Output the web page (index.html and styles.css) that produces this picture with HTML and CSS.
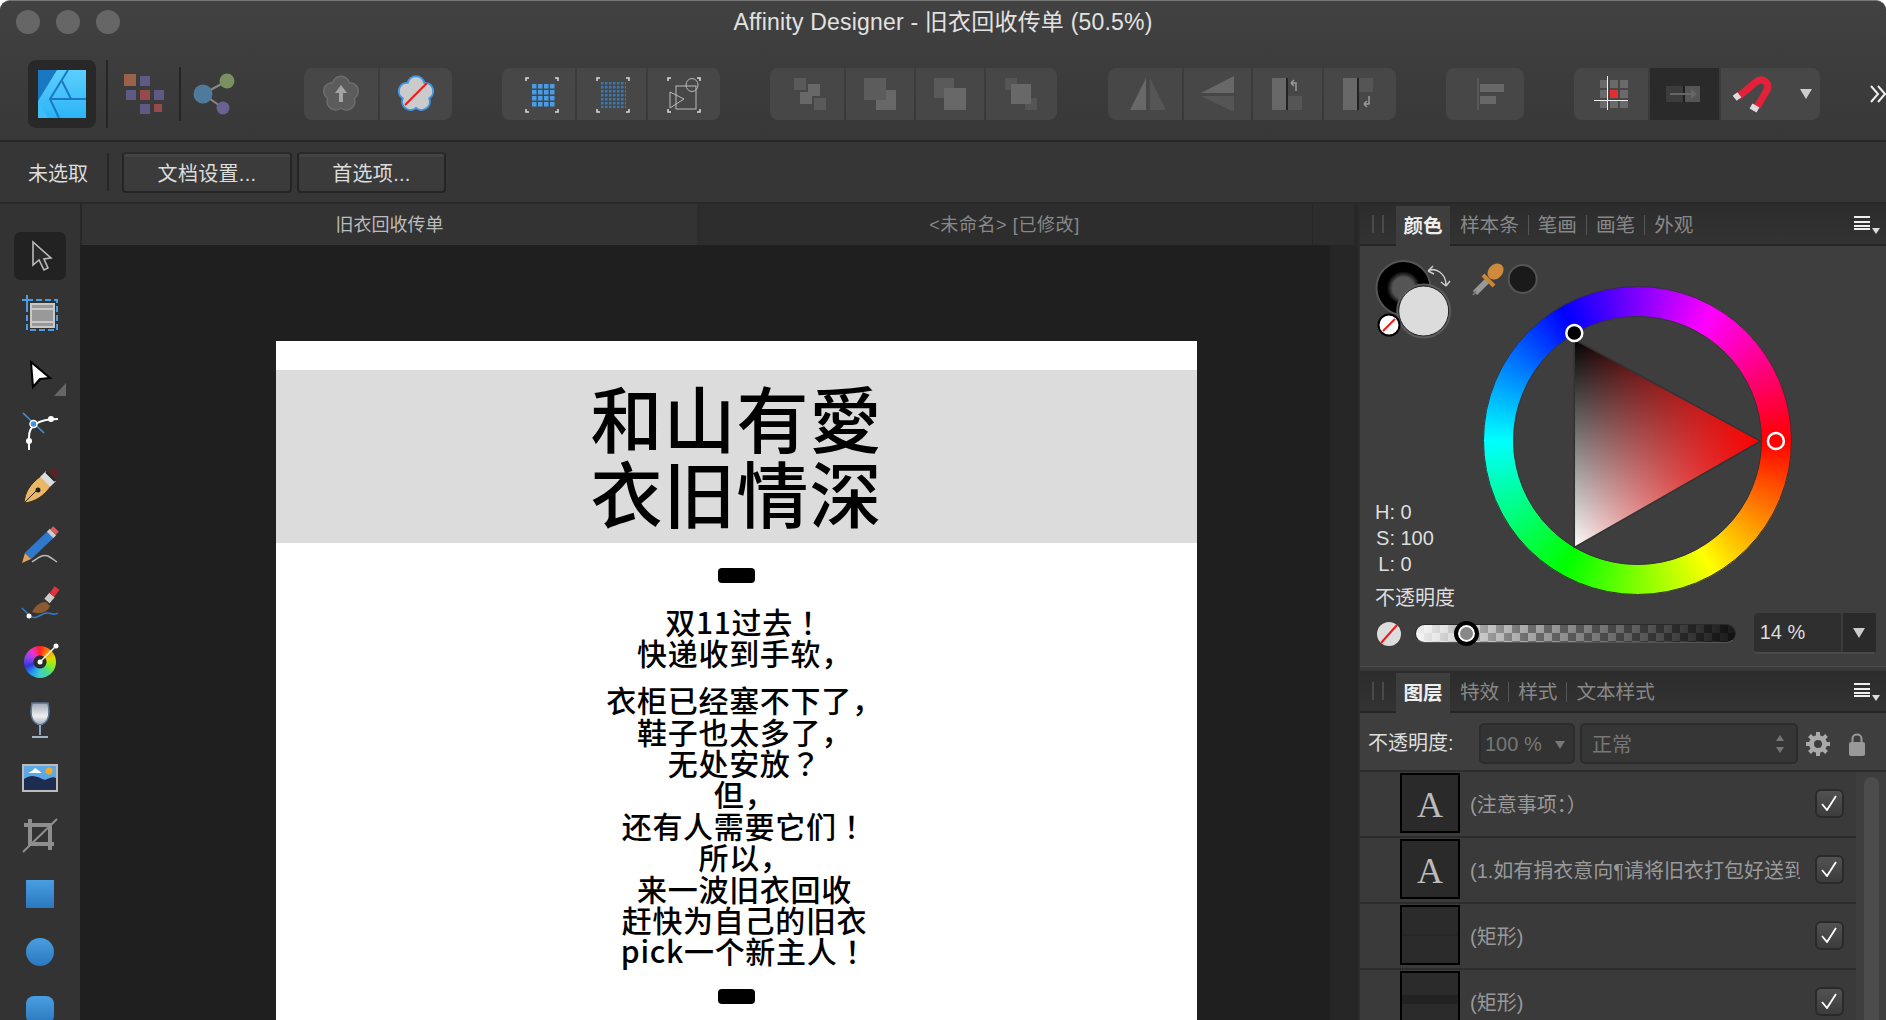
FILE: index.html
```html
<!DOCTYPE html>
<html lang="zh-CN">
<head>
    <meta charset="UTF-8">
    <title>Affinity Designer</title>
    <link rel="stylesheet" href="styles.css">
</head>
<body>
<div class="window">
    <div class="titlebar">
        <div class="lights"><span></span><span></span><span></span></div>
        <div class="title">Affinity Designer - 旧衣回收传单 (50.5%)</div>
    </div>

    <div class="toolbar">
        <div class="app-box">
            <svg width="48" height="48" viewBox="0 0 48 48">
                <defs><linearGradient id="appBg" x1="0" y1="0" x2="0" y2="1"><stop offset="0" stop-color="#5ccfff"/><stop offset="1" stop-color="#2cb4f6"/></linearGradient></defs>
                <rect width="48" height="48" fill="url(#appBg)"/>
                <path d="M0 0H19L0 31Z" fill="#1a78c2"/>
                <path d="M30 0L12 29L21 48" fill="none" stroke="#1a78c2" stroke-width="2"/>
                <path d="M12 29H48M24 11L33 29" fill="none" stroke="#1a78c2" stroke-width="2"/>
                <path d="M0 31L10 48H0Z" fill="#3fbdf8"/>
            </svg>
        </div>
        <div class="vsep tall"></div>
        <svg class="persona" width="71" height="68" viewBox="0 0 71 68">
            <rect x="16" y="14" width="12" height="12" fill="#9a6248"/>
            <rect x="32" y="16" width="10" height="10" fill="#5f5a85"/>
            <rect x="18" y="30" width="10" height="10" fill="#5f5a85"/>
            <rect x="32" y="30" width="10" height="10" fill="#964a4c"/>
            <rect x="46" y="30" width="10" height="10" fill="#5f5a85"/>
            <rect x="32" y="44" width="10" height="10" fill="#5f5a85"/>
            <rect x="46" y="44" width="8" height="8" fill="#964a4c"/>
        </svg>
        <div class="vsep"></div>
        <svg class="persona" width="60" height="68" viewBox="1 0 60 68">
            <path d="M23 34L47 21M23 34L43 48" stroke="#888" stroke-width="2"/>
            <circle cx="23" cy="34" r="9.5" fill="#4e7b9c"/>
            <circle cx="47" cy="21" r="7.5" fill="#7a9060"/>
            <circle cx="43" cy="48" r="6.5" fill="#6a6292"/>
        </svg>

        <div class="group g1">
            <div class="tb"><svg width="40" height="40" viewBox="0 0 40 40">
                <path d="M11.77 8.67A8.5 8.5 0 0 1 28.23 8.67A8.5 8.5 0 0 1 33.31 24.33A8.5 8.5 0 0 1 20 34A8.5 8.5 0 0 1 6.69 24.33A8.5 8.5 0 0 1 11.77 8.67Z" fill="#5c5c5c" stroke="#6e6e6e" stroke-width="1.5"/>
                <path d="M20 11L26 19H22V28H18V19H14Z" fill="#a4a4a4"/>
            </svg></div>
            <div class="tb"><svg width="40" height="40" viewBox="0 0 40 40">
                <path d="M11.77 8.67A8.5 8.5 0 0 1 28.23 8.67A8.5 8.5 0 0 1 33.31 24.33A8.5 8.5 0 0 1 20 34A8.5 8.5 0 0 1 6.69 24.33A8.5 8.5 0 0 1 11.77 8.67Z" fill="#cbcbcb" stroke="#3e97e6" stroke-width="2"/>
                <path d="M9 31L31 9" stroke="#f01818" stroke-width="2"/>
            </svg></div>
        </div>

        <div class="group g2">
            <div class="tb"><svg width="40" height="40" viewBox="-3 0 40 40">
                <defs><pattern id="dotsBig" width="6" height="6" patternUnits="userSpaceOnUse" x="10" y="10"><rect width="4.5" height="4.5" fill="#4a9ce6"/></pattern></defs>
                <path class="marks" d="M4 7V4H7M33 4H36V7M36 35V38H33M7 38H4V35"/>
                <rect x="10" y="10" width="23" height="23" fill="url(#dotsBig)"/>
            </svg></div>
            <div class="tb"><svg width="40" height="40" viewBox="-1 0 40 40">
                <defs><pattern id="dotsSmall" width="4" height="4" patternUnits="userSpaceOnUse" x="8" y="8"><rect width="2.5" height="2.5" fill="#3a79b6"/></pattern></defs>
                <path class="marks" d="M4 7V4H7M33 4H36V7M36 35V38H33M7 38H4V35"/>
                <rect x="8" y="8" width="25" height="26" fill="url(#dotsSmall)"/>
            </svg></div>
            <div class="tb"><svg width="40" height="40" viewBox="0 0 40 40">
                <path class="marks" d="M4 7V4H7M33 4H36V7M36 35V38H33M7 38H4V35"/>
                <g fill="none" stroke="#bbb" stroke-width="1">
                    <rect x="12" y="12" width="20" height="23"/>
                    <ellipse cx="28" cy="11" rx="6" ry="6.5"/>
                    <path d="M6 18L20 25L6 34Z"/>
                </g>
            </svg></div>
        </div>

        <div class="group g3">
            <div class="tb"><svg width="40" height="40" viewBox="0 0 40 40">
                <rect x="7" y="4" width="12" height="12" fill="#5a5a5a"/>
                <rect x="21" y="10" width="12" height="12" fill="#686868"/>
                <rect x="13" y="18" width="12" height="12" fill="#686868"/>
                <rect x="27" y="24" width="12" height="12" fill="#5a5a5a"/>
            </svg></div>
            <div class="tb"><svg width="40" height="40" viewBox="0 0 40 40">
                <rect x="4" y="4" width="22" height="22" fill="#5c5c5c"/>
                <path d="M26 16H36V36H16V26H26Z" fill="#686868"/>
            </svg></div>
            <div class="tb"><svg width="40" height="40" viewBox="0 0 40 40">
                <rect x="4" y="4" width="20" height="20" fill="#5a5a5a"/>
                <rect x="14" y="14" width="22" height="22" fill="#686868"/>
            </svg></div>
            <div class="tb"><svg width="40" height="40" viewBox="0 0 40 40">
                <rect x="3" y="4" width="12" height="12" fill="#555"/>
                <rect x="23" y="24" width="12" height="12" fill="#555"/>
                <rect x="9" y="10" width="20" height="20" fill="#686868"/>
            </svg></div>
        </div>

        <div class="group g4">
            <div class="tb"><svg width="40" height="40" viewBox="0 0 40 40">
                <path d="M21 4V36H5Z" fill="#686868"/><path d="M25 4V36H41Z" fill="#555"/>
            </svg></div>
            <div class="tb"><svg width="40" height="40" viewBox="0 0 40 40">
                <path d="M36 2L3 19H36Z" fill="#686868"/><path d="M3 22H36V38Z" fill="#555"/>
            </svg></div>
            <div class="tb"><svg width="40" height="40" viewBox="0 0 40 40">
                <rect x="4" y="4" width="14" height="32" fill="#686868"/>
                <rect x="18" y="4" width="2" height="32" fill="#222"/>
                <rect x="20" y="22" width="14" height="14" fill="#555"/>
                <path d="M28 17V9H23M23 9L26 6M23 9L26 12" fill="none" stroke="#999" stroke-width="1.5"/>
            </svg></div>
            <div class="tb"><svg width="40" height="40" viewBox="0 0 40 40">
                <rect x="3" y="4" width="14" height="32" fill="#686868"/>
                <rect x="17" y="4" width="2" height="32" fill="#222"/>
                <rect x="19" y="4" width="14" height="14" fill="#555"/>
                <path d="M29 22V30H24M24 30L27 27M24 30L27 33" fill="none" stroke="#999" stroke-width="1.5"/>
            </svg></div>
        </div>

        <div class="group g5">
            <div class="tb"><svg width="40" height="40" viewBox="0 0 40 40">
                <rect x="12" y="4" width="2" height="32" fill="#585858"/>
                <rect x="15" y="10" width="24" height="8" fill="#686868"/>
                <rect x="15" y="22" width="16" height="8" fill="#686868"/>
            </svg></div>
        </div>

        <div class="group g6">
            <div class="tb"><svg width="40" height="40" viewBox="0 0 40 40">
                <g fill="#6a6a6a">
                    <rect x="9" y="6" width="8" height="8"/><rect x="19" y="6" width="8" height="8"/><rect x="29" y="6" width="8" height="8"/>
                    <rect x="9" y="16" width="8" height="8"/><rect x="29" y="16" width="8" height="8"/>
                    <rect x="9" y="26" width="8" height="8"/><rect x="19" y="26" width="8" height="8"/><rect x="29" y="26" width="8" height="8"/>
                </g>
                <rect x="19" y="16" width="8" height="8" fill="#e22f2f"/>
                <path d="M3 26.5H37M16.5 2V36" stroke="#eee" stroke-width="1"/>
            </svg></div>
            <div class="tb off"><svg width="40" height="40" viewBox="0 0 40 40">
                <rect x="1" y="12" width="18" height="16" fill="#3c3c3c"/>
                <rect x="19" y="12" width="16" height="16" fill="#555"/>
                <rect x="18" y="12" width="2" height="16" fill="#1c1c1c"/>
                <path d="M5 19H26V15L32 20L26 25V21H5Z" fill="#666"/>
            </svg></div>
            <div class="tb snap">
                <svg width="44" height="40" viewBox="0 0 44 40">
                    <path d="M9 23L27 8C33 3 41 8 38 16L28 33" fill="none" stroke="#e5213a" stroke-width="7"/>
                    <path d="M10 25L6 20M29 36L22 32" stroke="#ddd" stroke-width="6"/>
                </svg>
                <span class="tri"></span>
            </div>
        </div>

        <svg class="more" width="16" height="18" viewBox="0 0 16 18"><path d="M1 1L8 9L1 17M8 1L15 9L8 17" fill="none" stroke="#eee" stroke-width="2"/></svg>
    </div>

    <div class="context">
        <span class="no-sel">未选取</span>
        <div class="vsep short"></div>
        <button class="ctx-btn doc">文档设置...</button>
        <button class="ctx-btn prefs">首选项...</button>
    </div>

    <div class="workspace">
        <div class="tools">
            <div class="tool"><svg width="80" height="58" viewBox="0 0 80 58">
                <rect x="14" y="5" width="52" height="48" rx="7" fill="#222"/>
                <path d="M33 15V38L39 33L44 43L48 41L44 32L51 31Z" fill="#2a2a2a" stroke="#bbb" stroke-width="1.6"/>
            </svg></div>
            <div class="tool"><svg width="80" height="58" viewBox="0 0 80 58">
                <rect x="27" y="15" width="30" height="30" fill="none" stroke="#4a9ce6" stroke-width="2" stroke-dasharray="6 3"/>
                <path d="M22 15H33M27 10V21" stroke="#4a9ce6" stroke-width="2"/>
                <rect x="31" y="19" width="23" height="23" fill="#999" stroke="#c8c8c8" stroke-width="2"/>
                <path d="M31 24H54M31 37H54" stroke="#c8c8c8" stroke-width="2"/>
            </svg></div>
            <div class="tool"><svg width="80" height="58" viewBox="0 0 80 58">
                <path d="M31 19L50 35L40 36L33 44Z" fill="#fff" stroke="#000" stroke-width="2"/>
                <path d="M66 40V53H54Z" fill="#666"/>
            </svg></div>
            <div class="tool"><svg width="80" height="58" viewBox="0 0 80 58">
                <path d="M23 12L44 32" stroke="#3f92dc" stroke-width="1.6"/>
                <path d="M29 49V36C29 25 38 18 58 18" fill="none" stroke="#fff" stroke-width="2"/>
                <circle cx="51" cy="18" r="3" fill="#fff"/><circle cx="29" cy="40" r="3" fill="#fff"/>
                <circle cx="33.5" cy="23" r="3.5" fill="#3f92dc" stroke="#fff" stroke-width="1.5"/>
            </svg></div>
            <div class="tool"><svg width="80" height="58" viewBox="0 0 80 58">
                <path d="M24 44C25 33 30 25 41 17L51 27C44 37 35 43 24 44Z" fill="#eab766" stroke="#3b2f1c" stroke-width="1"/>
                <path d="M24 44L37 31" stroke="#222" stroke-width="1"/><circle cx="38" cy="31" r="2.5" fill="#222"/>
                <path d="M43 15L53 25" stroke="#ddd" stroke-width="8"/>
                <path d="M46 13L55 22" stroke="#222" stroke-width="2"/>
                <path d="M48 11L58 11L58 21Z" fill="#5a2222"/>
            </svg></div>
            <div class="tool"><svg width="80" height="58" viewBox="0 -2 80 58">
                <path d="M28 37L50 16" stroke="#2f78cc" stroke-width="9"/>
                <path d="M25 34L31 40L22 44Z" fill="#e0a060"/>
                <path d="M50 16L53 13" stroke="#ccc" stroke-width="9"/>
                <path d="M53 13L56 10" stroke="#e05a5a" stroke-width="8"/>
                <path d="M32 43C38 39 42 35 48 37C52 39 54 41 57 43" fill="none" stroke="#bbb" stroke-width="1.5"/>
            </svg></div>
            <div class="tool"><svg width="80" height="58" viewBox="0 0 80 58">
                <path d="M32 37C36 30 40 27 46 27L50 31C48 37 40 40 32 37Z" fill="#8a5a30"/>
                <path d="M47 26L52 20" stroke="#ccc" stroke-width="7"/>
                <path d="M52 20L57 13" stroke="#e0323a" stroke-width="6"/>
                <path d="M22 33L30 41C36 46 42 37 48 38C52 38 54 41 58 38" fill="none" stroke="#2f7ec8" stroke-width="1.5"/>
                <circle cx="29" cy="41" r="2.5" fill="#fff"/>
            </svg></div>
            <div class="tool">
                <div class="hue-tool"></div>
                <svg class="hue-handle" width="80" height="58" viewBox="0 0 80 58">
                    <path d="M40 29L56 13" stroke="#fff" stroke-width="1.5"/>
                    <circle cx="40" cy="29" r="2.5" fill="#fff"/><circle cx="56" cy="13" r="2.5" fill="#fff"/>
                </svg>
            </div>
            <div class="tool"><svg width="80" height="58" viewBox="0 0 80 58">
                <defs><linearGradient id="glass" x1="0" y1="0" x2="0" y2="1"><stop offset="0" stop-color="#9aa7b5"/><stop offset=".6" stop-color="#f0f0f0"/><stop offset="1" stop-color="#9aa7b5"/></linearGradient></defs>
                <path d="M32 12H48C50 22 49 32 40 34C31 32 30 22 32 12Z" fill="url(#glass)" stroke="#5a7490" stroke-width="1.5"/>
                <path d="M40 34V44" stroke="#8ea4ba" stroke-width="2"/>
                <path d="M32 46H48" stroke="#9fb2c4" stroke-width="2"/>
            </svg></div>
            <div class="tool"><svg width="80" height="58" viewBox="0 0 80 58">
                <rect x="23" y="16" width="34" height="26" fill="#5aa8e8" stroke="#bbb" stroke-width="2"/>
                <path d="M24 30C32 24 38 28 45 31C49 29 53 27 56 29V41H24Z" fill="#1e2c50"/>
                <path d="M28 24H42L38 21L35 19L32 22Z" fill="#fff"/>
                <circle cx="49" cy="22" r="3.5" fill="#f5a823"/>
            </svg></div>
            <div class="tool"><svg width="80" height="58" viewBox="0 0 80 58">
                <path d="M30 12V37H54M24 18H50V43" fill="none" stroke="#8e8e8e" stroke-width="4"/>
                <path d="M23 45L57 12" stroke="#8e8e8e" stroke-width="2"/>
            </svg></div>
            <div class="tool"><div class="shape"></div></div>
            <div class="tool"><div class="shape circle"></div></div>
            <div class="tool"><div class="shape rounded"></div></div>
        </div>

        <div class="center">
            <div class="doc-tabs">
                <div class="doc-tab active">旧衣回收传单</div>
                <div class="doc-tab">&lt;未命名&gt; [已修改]</div>
                <div class="doc-tab-end"></div>
            </div>
            <div class="canvas-row">
                <div class="canvas">
                    <div class="page">
                        <div class="band">
                            <div class="headline">和山有<span lang="zh-TW">愛</span></div>
                            <div class="headline">衣旧情深</div>
                        </div>
                        <div class="pill"></div>
                        <p class="copy">双11过去<span class="mark" lang="zh-TW">！</span><br>快递收到手软，</p>
                        <p class="copy">衣柜已经塞不下了，<br>鞋子也太多了，<br>无处安放<span class="mark" lang="zh-TW">？</span><br>但，<br>还有人需要它们<span class="mark" lang="zh-TW">！</span><br>所以，<br>来一波旧衣回收<br>赶快为自己的旧衣<br>pick一个新主人<span class="mark" lang="zh-TW">！</span></p>
                        <div class="pill end"></div>
                    </div>
                </div>
                <div class="v-strip"></div>
            </div>
        </div>

        <div class="side">
            <div class="panel-tabs">
                <div class="handle"></div>
                <div class="tab-on">颜色</div>
                <div class="tab first">样本条</div>
                <div class="tab">笔画</div>
                <div class="tab">画笔</div>
                <div class="tab">外观</div>
                <div class="menu"><i></i></div>
            </div>
            <div class="color-panel">
                <div class="color-main">
                    <div class="color-left">
                        <svg class="swatches" width="180" height="70" viewBox="0 0 180 70">
                            <defs><radialGradient id="strokeRing"><stop offset=".4" stop-color="#555"/><stop offset=".62" stop-color="#000"/><stop offset="1" stop-color="#000"/></radialGradient></defs>
                            <circle cx="33.5" cy="30" r="27" fill="url(#strokeRing)" stroke="#555" stroke-width="2"/>
                            <circle cx="53.7" cy="53" r="25" fill="#dcdcdc" stroke="#222" stroke-width="1"/>
                            <circle cx="53.7" cy="53" r="26.5" fill="none" stroke="#5a5a5a" stroke-width="2"/>
                            <circle cx="19" cy="67" r="10.5" fill="#fff" stroke="#000" stroke-width="2"/>
                            <path d="M13 73L25 61" stroke="#f01818" stroke-width="2"/>
                            <path d="M58 13C65 9 76 15 76 27M58 13L63 8M58 13L64 16M76 28L71 24M76 28L80 23" fill="none" stroke="#ccc" stroke-width="1.5"/>
                            <path d="M105 35L118 22" stroke="#999" stroke-width="6"/>
                            <path d="M103 37L106 33" stroke="#777" stroke-width="2"/>
                            <path d="M113 17L124 28" stroke="#c8863a" stroke-width="4"/>
                            <ellipse cx="125.5" cy="13.5" rx="7" ry="9" transform="rotate(45 125.5 13.5)" fill="#cf8a3e"/>
                            <circle cx="152.7" cy="21" r="14" fill="#1a1a1a" stroke="#555" stroke-width="2"/>
                        </svg>
                        <div class="hsl">
                            <span>H:</span><span>0</span>
                            <span>S:</span><span>100</span>
                            <span>L:</span><span>0</span>
                        </div>
                        <div class="opacity-label">不透明度</div>
                    </div>
                    <div class="wheel-box">
                        <div class="wheel"></div>
                        <svg class="wheel-over" width="309" height="309" viewBox="0 0 309 309">
                            <defs>
                                <linearGradient id="triGray" x1="0" y1="53" x2="0" y2="262" gradientUnits="userSpaceOnUse"><stop offset="0" stop-color="#000"/><stop offset="1" stop-color="#fff"/></linearGradient>
                                <linearGradient id="triHue" x1="91" y1="0" x2="277" y2="0" gradientUnits="userSpaceOnUse"><stop offset="0" stop-color="#f00" stop-opacity="0"/><stop offset="1" stop-color="#f00"/></linearGradient>
                            </defs>
                            <circle cx="154.500" cy="154.500" r="154" fill="none" stroke="#333"/>
                            <circle cx="154.500" cy="154.500" r="124" fill="none" stroke="#333"/>
                            <path d="M91.3 53.500L277.5 155.200L91.3 261.500Z" fill="url(#triGray)"/>
                            <path d="M91.3 53.500L277.5 155.200L91.3 261.500Z" fill="url(#triHue)" stroke="#333" stroke-width="1.5"/>
                            <circle cx="91.3" cy="47" r="8" fill="#000" stroke="#fff" stroke-width="2.5"/>
                            <circle cx="292.9" cy="155" r="8" fill="#f00" stroke="#fff" stroke-width="2.5"/>
                        </svg>
                    </div>
                </div>
                <div class="opacity-row">
                    <svg width="24" height="24" viewBox="0 0 24 24"><circle cx="12" cy="12" r="12" fill="#ddd"/><path d="M4 21L20 3" stroke="#f01818" stroke-width="2"/></svg>
                    <div class="slider"><span class="knob"></span></div>
                    <div class="num-combo"><span class="num-val">14 %</span><span class="num-arrow"><i class="tri"></i></span></div>
                </div>
            </div>

            <div class="panel-gap"></div>

            <div class="panel-tabs">
                <div class="handle"></div>
                <div class="tab-on">图层</div>
                <div class="tab first">特效</div>
                <div class="tab">样式</div>
                <div class="tab">文本样式</div>
                <div class="menu"><i></i></div>
            </div>
            <div class="layer-head">
                <span class="layer-label">不透明度:</span>
                <div class="sel pct">100 %<i class="tri dim"></i></div>
                <div class="sel blend">正常<span class="stepper"><i></i><i></i></span></div>
                <svg class="gear" width="24" height="24" viewBox="0 0 24 24">
                    <path d="M12 0V5M12 19V24M0 12H5M19 12H24M3.5 3.5L7 7M20.5 3.5L17 7M3.5 20.5L7 17M20.5 20.5L17 17" stroke="#aaa" stroke-width="4"/>
                    <circle cx="12" cy="12" r="6.5" fill="none" stroke="#aaa" stroke-width="5"/>
                </svg>
                <svg class="lock" width="16" height="24" viewBox="0 0 16 24">
                    <path d="M3.5 11V6.500C3.5 1 12.500 1 12.500 6.500V11" fill="none" stroke="#999" stroke-width="2"/>
                    <rect y="10" width="16" height="14" rx="2" fill="#999"/>
                </svg>
            </div>
            <div class="layer-body">
                <div class="layers">
                    <div class="layer"><div class="thumb text">A</div><div class="layer-name">(注意事项：）</div><div class="check"><svg width="16" height="16" viewBox="0 0 16 16"><path d="M1 9L6 15L15 1" fill="none" stroke="#fff" stroke-width="1.8"/></svg></div></div>
                    <div class="layer"><div class="thumb text">A</div><div class="layer-name">(1.如有捐衣意向¶请将旧衣打包好送到</div><div class="check"><svg width="16" height="16" viewBox="0 0 16 16"><path d="M1 9L6 15L15 1" fill="none" stroke="#fff" stroke-width="1.8"/></svg></div></div>
                    <div class="layer"><div class="thumb rect"></div><div class="layer-name">(矩形)</div><div class="check"><svg width="16" height="16" viewBox="0 0 16 16"><path d="M1 9L6 15L15 1" fill="none" stroke="#fff" stroke-width="1.8"/></svg></div></div>
                    <div class="layer"><div class="thumb rect low"></div><div class="layer-name">(矩形)</div><div class="check"><svg width="16" height="16" viewBox="0 0 16 16"><path d="M1 9L6 15L15 1" fill="none" stroke="#fff" stroke-width="1.8"/></svg></div></div>
                </div>
                <div class="scroll-thumb"></div>
            </div>
        </div>
    </div>
</div>
</body>
</html>
```
FILE: styles.css
```css
* {
    box-sizing: border-box;
}

body {
    margin: 0;
    height: 100vh;
    overflow: hidden;
    background: #fff;
    font-family: "Liberation Sans", "Noto Sans CJK SC", sans-serif;
    color: #ddd;
}

svg {
    display: block;
}

.window {
    width: 1886px;
    height: 1020px;
    overflow: hidden;
    border-radius: 10px 10px 0 0;
    background: #3a3a3a;
    border-top: 1px solid #777;
    display: flex;
    flex-direction: column;
}

/* title bar */
.titlebar {
    height: 43px;
    flex-shrink: 0;
    position: relative;
    display: flex;
    align-items: center;
    justify-content: center;
    background: linear-gradient(#424242, #3e3e3e);
}

.lights {
    position: absolute;
    left: 16px;
    top: 9px;
    display: flex;
    gap: 16px;
}

.lights span {
    width: 24px;
    height: 24px;
    border-radius: 50%;
    background: #666;
}

.title {
    font-size: 23px;
    letter-spacing: 0.2px;
    color: #e2e2e2;
    padding-bottom: 5px;
}

/* main toolbar */
.toolbar {
    height: 98px;
    flex-shrink: 0;
    padding: 4px 0 0 28px;
    display: flex;
    align-items: center;
    border-bottom: 2px solid #272727;
    background: linear-gradient(#3e3e3e, #383838);
}

.app-box {
    width: 68px;
    height: 68px;
    padding: 10px;
    border-radius: 8px;
    background: #282828;
}

.vsep {
    width: 2px;
    height: 54px;
    background: #252525;
    flex-shrink: 0;
}

.vsep.tall {
    height: 68px;
    margin-left: 10px;
}

.persona {
    flex-shrink: 0;
}

.group {
    display: grid;
    gap: 2px;
    height: 52px;
    border-radius: 8px;
    overflow: hidden;
    flex-shrink: 0;
}

.tb {
    background: #474747;
    display: flex;
    align-items: center;
    justify-content: center;
}

.tb.off {
    background: #2a2a2a;
}

.tb.snap {
    justify-content: flex-start;
    padding-left: 8px;
    gap: 27px;
}

.marks {
    fill: none;
    stroke: #ddd;
    stroke-width: 1.5;
}

.g1 {
    margin-left: 63px;
    grid-template-columns: 74px 72px;
}

.g2 {
    margin-left: 50px;
    grid-template-columns: 73px 69px 72px;
}

.g3 {
    margin-left: 50px;
    grid-template-columns: 74px 68px 68px 71px;
}

.g4 {
    margin-left: 51px;
    grid-template-columns: 74px 67px 69px 72px;
}

.g5 {
    margin-left: 50px;
    grid-template-columns: 78px;
}

.g6 {
    margin-left: 50px;
    grid-template-columns: 74px 69px 99px;
}

.tri {
    display: block;
    width: 0;
    height: 0;
    border-left: 6px solid transparent;
    border-right: 6px solid transparent;
    border-top: 10px solid #ccc;
}

.tri.dim {
    border-left-width: 5px;
    border-right-width: 5px;
    border-top: 8px solid #777;
}

.more {
    margin-left: 50px;
    flex-shrink: 0;
}

/* context bar */
.context {
    height: 60px;
    flex-shrink: 0;
    padding-left: 28px;
    display: flex;
    align-items: center;
    background: #363636;
    font-size: 20px;
}

.no-sel {
    width: 79px;
    color: #ddd;
}

.context .vsep.short {
    height: 38px;
    background: #272727;
}

.ctx-btn {
    height: 41px;
    border: 2px solid #252525;
    border-top-color: #2a2a2a;
    border-radius: 4px;
    background: linear-gradient(#444 0, #444 3px, #3b3b3b 3px);
    color: #ddd;
    font: inherit;
    letter-spacing: 0.3px;
    padding: 0;
}

.ctx-btn.doc {
    width: 170px;
    margin-left: 13px;
}

.ctx-btn.prefs {
    width: 149px;
    margin-left: 5px;
}

/* work area */
.workspace {
    flex: 1;
    display: flex;
    min-height: 0;
    border-top: 2px solid #282828;
}

.tools {
    width: 80px;
    flex-shrink: 0;
    padding-top: 23px;
    background: #333;
}

.tool {
    height: 58px;
    position: relative;
}

.hue-tool {
    position: absolute;
    left: 24px;
    top: 13px;
    width: 32px;
    height: 32px;
    border-radius: 50%;
    background:
        radial-gradient(circle, #2a2a2a 6px, transparent 7px),
        conic-gradient(from 0deg, #f22, #f80, #dd0, #8e2, #4d8, #4cc, #29e, #33d, #84e, #e3c, #f22);
}

.hue-handle {
    position: absolute;
    left: 0;
    top: 0;
}

.shape {
    position: absolute;
    left: 26px;
    top: 15px;
    width: 28px;
    height: 28px;
    background: linear-gradient(#4a9ee0, #2a78c0);
}

.shape.circle {
    border-radius: 50%;
}

.shape.rounded {
    border-radius: 8px;
}

.center {
    width: 1278px;
    flex-shrink: 0;
    display: flex;
    flex-direction: column;
    min-height: 0;
    background: #1f1f1f;
}

.doc-tabs {
    height: 41px;
    flex-shrink: 0;
    display: flex;
    background: #282828;
    font-size: 18px;
    color: #888;
}

.doc-tab {
    display: flex;
    align-items: center;
    justify-content: center;
    padding-bottom: 4px;
}

.doc-tab.active {
    width: 615px;
    margin-left: 2px;
    background: #333;
    color: #bbb;
}

.doc-tab:not(.active) {
    width: 615px;
    letter-spacing: 0.6px;
    background: #2d2d2d;
}

.doc-tab-end {
    width: 42px;
    background: #2d2d2d;
    border-left: 1px solid #262626;
}

.canvas-row {
    flex: 1;
    display: flex;
    min-height: 0;
}

.canvas {
    flex: 1;
    padding: 96px 0 0 196px;
    overflow: hidden;
    background: #1f1f1f;
}

.v-strip {
    width: 28px;
    background: #262626;
}

.page {
    width: 921px;
    height: 700px;
    padding-top: 29px;
    background: #fff;
    color: #000;
    font-family: "Noto Sans CJK SC", sans-serif;
    font-weight: 500;
}

.band {
    height: 173px;
    padding-bottom: 8px;
    background: #dcdcdc;
    display: flex;
    flex-direction: column;
    align-items: center;
    justify-content: center;
}

.headline {
    font-size: 72px;
    line-height: 75px;
    letter-spacing: 1px;
}

.pill {
    width: 37px;
    height: 15px;
    margin: 25px auto 0;
    border-radius: 4px;
    background: #000;
}

.pill.end {
    margin-top: 28.5px;
}

.copy {
    margin: 22.5px 0 -6.6px;
    padding-left: 16px;
    font-size: 30px;
    line-height: 31.4px;
    letter-spacing: 0.7px;
    text-align: center;
}

.mark {
    font-family: "Noto Sans CJK TC", sans-serif;
}

/* right panels */
.side {
    width: 528px;
    flex-shrink: 0;
    background: #3e3e3e;
    border-left: 2px solid #2c2c2c;
}

.panel-tabs {
    height: 42px;
    display: flex;
    align-items: flex-end;
    position: relative;
    background: linear-gradient(#2c2c2c, #333);
    border-bottom: 2px solid #252525;
    font-size: 19.6px;
}

.handle {
    width: 36px;
    height: 40px;
    position: relative;
}

.handle::before {
    content: "";
    position: absolute;
    left: 12px;
    top: 11px;
    width: 8px;
    height: 18px;
    border-left: 2px solid #4a4a4a;
    border-right: 2px solid #4a4a4a;
}

.tab-on {
    width: 54px;
    height: 40px;
    margin-bottom: -2px;
    padding-bottom: 4px;
    display: flex;
    align-items: center;
    justify-content: center;
    background: #3e3e3e;
    color: #eee;
    font-weight: 700;
}

.tab {
    height: 20px;
    line-height: 20px;
    margin-bottom: 9px;
    padding: 0 9px;
    color: #888;
    border-left: 1px solid #555;
}

.tab.first {
    margin-left: 1px;
    border-left: none;
}

.menu {
    position: absolute;
    left: 494px;
    top: 12px;
    width: 16px;
    height: 14px;
    border-top: 2px solid #eee;
    border-bottom: 2px solid #eee;
    background: linear-gradient(#eee, #eee) 0 3px / 16px 2px no-repeat,
        linear-gradient(#eee, #eee) 0 7px / 16px 2px no-repeat;
}

.menu i {
    position: absolute;
    left: 18px;
    top: 10px;
    border-left: 4px solid transparent;
    border-right: 4px solid transparent;
    border-top: 6px solid #ddd;
}

.color-panel {
    height: 420px;
    background: #3e3e3e;
}

.color-main {
    height: 367px;
    display: flex;
}

.color-left {
    width: 123px;
    flex-shrink: 0;
    padding: 0 0 5px 15px;
    display: flex;
    flex-direction: column;
}

.swatches {
    margin: 12px 0 0 -5px;
    overflow: visible;
    flex-shrink: 0;
}

.hsl {
    margin-top: auto;
    display: grid;
    grid-template-columns: 20px auto;
    column-gap: 5.5px;
    justify-content: start;
    font-size: 20px;
    line-height: 26px;
    text-align: left;
}

.hsl span:nth-child(odd) {
    text-align: right;
}

.opacity-label {
    margin-top: 11px;
    font-size: 20px;
    line-height: 20px;
}

.wheel-box {
    position: relative;
    width: 309px;
    height: 309px;
    margin-top: 40.4px;
    flex-shrink: 0;
}

.wheel {
    width: 309px;
    height: 309px;
    border-radius: 50%;
    background: conic-gradient(from 90deg, #f00, #ff0, #0f0, #0ff, #00f, #f0f, #f00);
    -webkit-mask: radial-gradient(circle, transparent 123.5px, #000 124.5px);
    mask: radial-gradient(circle, transparent 123.5px, #000 124.5px);
}

.wheel-over {
    position: absolute;
    left: 0;
    top: 0;
}

.opacity-row {
    height: 41px;
    padding-left: 17px;
    display: flex;
    align-items: center;
}

.slider {
    width: 321px;
    height: 19px;
    margin-left: 13.7px;
    position: relative;
    border-radius: 10px;
    border: 1px solid #2a2a2a;
    border-bottom-color: #555;
    background:
        linear-gradient(90deg, rgba(255, 255, 255, 0.9), rgba(150, 150, 150, 0) 35%, rgba(0, 0, 0, 0.85)),
        repeating-conic-gradient(#a8a8a8 0 25%, #6c6c6c 0 50%) 0 0 / 16px 16px;
}

.knob {
    position: absolute;
    left: 39px;
    top: -3px;
    width: 23px;
    height: 23px;
    border-radius: 50%;
    background: #888;
    border: 3px solid #000;
    box-shadow: inset 0 0 0 2px #fff, 0 0 0 1px #000;
}

.num-combo {
    width: 122px;
    height: 41px;
    margin-left: 18px;
    display: flex;
    border-radius: 4px;
    background: #2f2f2f;
    border-bottom: 2px solid #4a4a4a;
    font-size: 20px;
}

.num-val {
    width: 87px;
    padding-left: 6px;
    line-height: 38px;
    color: #ddd;
}

.num-arrow {
    flex: 1;
    display: flex;
    align-items: center;
    justify-content: center;
    background: #2a2a2a;
    border-left: 2px solid #3c3c3c;
}

.panel-gap {
    height: 5px;
    background: #3a3a3a;
    border-top: 1px solid #4a4a4a;
}

.layer-head {
    height: 59px;
    padding: 4px 0 0 8px;
    display: flex;
    align-items: center;
    border-bottom: 2px solid #2c2c2c;
}

.layer-label {
    width: 111px;
    font-size: 20px;
    padding-bottom: 4px;
    flex-shrink: 0;
}

.sel {
    height: 41px;
    display: flex;
    align-items: center;
    justify-content: space-between;
    border-radius: 5px;
    border: 2px solid #2c2c2c;
    background: #363636;
    color: #777;
    font-size: 20px;
    flex-shrink: 0;
}

.sel.pct {
    width: 96px;
    padding: 2px 8px 0 4px;
    background: #333;
}

.sel.blend {
    width: 218px;
    margin-left: 5px;
    padding: 0 12px 0 10px;
}

.stepper {
    display: flex;
    flex-direction: column;
    gap: 6px;
}

.stepper i {
    border-left: 4px solid transparent;
    border-right: 4px solid transparent;
    border-bottom: 6px solid #777;
}

.stepper i:last-child {
    border-bottom: none;
    border-top: 6px solid #777;
}

.gear {
    margin-left: 8px;
    flex-shrink: 0;
}

.lock {
    margin-left: 19px;
    flex-shrink: 0;
}

.layer-body {
    display: flex;
}

.layers {
    width: 496px;
    flex-shrink: 0;
}

.layer {
    height: 66px;
    padding: 0 0 2px 40px;
    display: flex;
    align-items: center;
    border-bottom: 2px solid #2c2c2c;
    background: #3a3a3a;
}

.thumb {
    width: 60px;
    height: 60px;
    border: 2px solid #000;
    background: #2a2a2a;
    flex-shrink: 0;
}

.thumb.text {
    display: flex;
    align-items: center;
    justify-content: center;
    padding-top: 3px;
    font-family: "Liberation Serif", serif;
    font-size: 36px;
    color: #bbb;
}

.thumb.rect {
    background: linear-gradient(#2b2b2b 48%, #262626 48%, #262626 52%, #2b2b2b 52%);
}

.thumb.low {
    background: linear-gradient(#2b2b2b 40%, #222 40%, #222 55%, #2b2b2b 55%);
}

.layer-name {
    width: 330px;
    margin-left: 10px;
    overflow: hidden;
    white-space: nowrap;
    font-size: 20px;
    color: #999;
    flex-shrink: 0;
}

.check {
    width: 29px;
    height: 29px;
    margin-left: 14.5px;
    display: flex;
    align-items: center;
    justify-content: center;
    border-radius: 6px;
    border: 2px solid #2a2a2a;
    background: linear-gradient(#525252, #3c3c3c);
    flex-shrink: 0;
}

.scroll-thumb {
    width: 15px;
    height: 300px;
    margin: 5px 0 0 8px;
    border-radius: 8px 8px 0 0;
    background: #4c4c4c;
}
```
